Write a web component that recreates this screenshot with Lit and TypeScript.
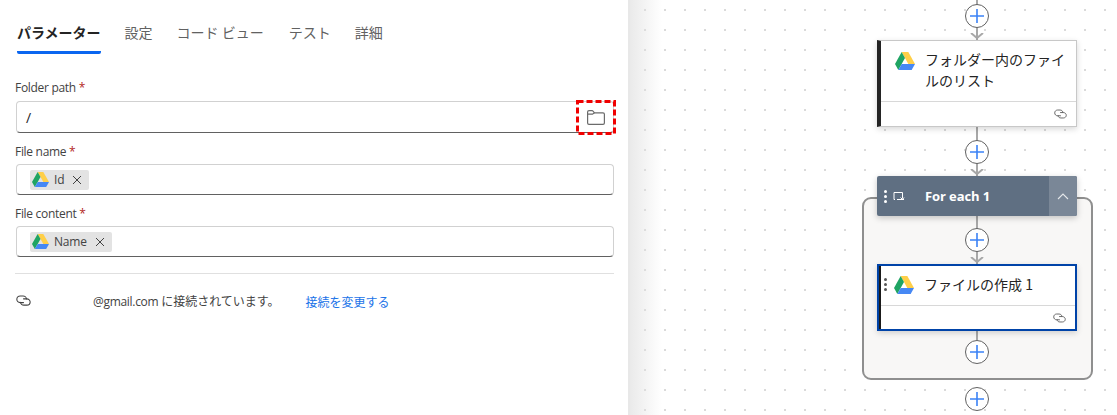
import { LitElement, html, css, svg } from "lit";
import { customElement } from "lit/decorators.js";

const driveIcon = (w: number, h: number) => html`<svg class="drive" width=${w} height=${h} viewBox="0 0 24 21" preserveAspectRatio="none">
  <polygon points="8,0 16,0 24,14 16,14" fill="#ffcf48"></polygon>
  <polygon points="8,0 12,7 4,21 0,14" fill="#1fa463"></polygon>
  <polygon points="8,14 24,14 20,21 4,21" fill="#4688f4"></polygon>
</svg>`;

const linkIcon = (w: number, h: number, stroke: string) => html`<svg width=${w} height=${h} viewBox="0 0 18 13" fill="none" stroke=${stroke} stroke-width="1.3" stroke-linecap="round">
  <path d="M9 9H5C2.800 9 1 7.300 1 5S2.800 1 5 1H8.500C10.700 1 12.500 2.800 12.500 4.600"></path>
  <path d="M9 4.500H13C15.200 4.500 17 6.300 17 8.300S15.200 12 13 12H9.500C7.300 12 5.500 10.500 5.500 8.500"></path>
</svg>`;

const closeIcon = html`<svg class="chip-x" width="10" height="10" viewBox="0 0 10 10" stroke="#424242" stroke-width="1"><path d="M1 1L9 9M9 1L1 9"></path></svg>`;

const folderIcon = html`<svg width="18" height="15" viewBox="0 0 18 15" fill="none" stroke="#6b6b6b" stroke-width="1.2"><path d="M.6 13V2C.6 1.200 1.200.6 2 .6H5C5.600.6 6 1 6.400 1.500L7.400 2.800H16C16.800 2.800 17.400 3.400 17.400 4.200V13C17.400 13.800 16.800 14.400 16 14.400H2C1.200 14.400.6 13.800.6 13Z"></path><path d="M.6 4.200H5.500L7.400 2.800"></path></svg>`;

const plusAt = [16, 152, 240, 352, 399];
const lines = [
  { top: 0, h: 40 },
  { top: 127, h: 49 },
  { top: 216, h: 48 },
  { top: 331, h: 9 },
];
const arrows = [33, 169, 257];

@customElement("app-root")
export class AppRoot extends LitElement {
  static styles = css`
    :host { display: flex; width: 1117px; height: 415px; overflow: hidden; background: #fff;
      font-family: "Open Sans", "Noto Sans CJK JP", sans-serif; color: #242424; }
    * { box-sizing: border-box; }
    .panel { width: 630px; flex: none; border-right: 2px solid #e8e8e8; padding: 0 15px; display: flex; flex-direction: column; background: #fff; }
    .tabs { display: flex; height: 54px; padding-left: 2px; gap: 24px; }
    .tab { font-size: 14px; line-height: 20px; padding-top: 22px; color: #616161; font-family: "Noto Sans CJK JP", sans-serif; height: 54px; }
    .tab.on { font-weight: 700; color: #242424; border-bottom: 3px solid #0a66f0; border-radius: 0 0 2px 2px; }
    .tab.wide { padding-right: 1px; }
    .form { display: flex; flex-direction: column; padding-top: 26px; }
    label { font-size: 12px; letter-spacing: -.3px; line-height: 16px; color: #424242; height: 20px; }
    label.first { height: 21px; }
    label i { color: #b3261e; font-style: normal; }
    .field { height: 32px; margin-left: 1px; margin-bottom: 11px; width: 598px; border: 1px solid #d1d1d1; border-bottom-color: #616161; border-radius: 4px; display: flex; align-items: center; position: relative; padding-left: 9px; font-size: 14px; }
    .field.tok { height: 31px; margin-bottom: 16px; padding-left: 13px; }
    .field.tok.mid { margin-bottom: 11px; }
    .folder { margin-left: auto; margin-right: 8px; display: flex; }
    .dash { position: absolute; left: 559px; top: -2px; display: flex; }
    .chip { display: flex; align-items: center; height: 20px; background: #e3e3e3; border-radius: 2px; font-size: 12px; letter-spacing: -.2px; color: #424242; padding-left: 2px; padding-right: 7px; }
    .chip .drive { margin-right: 5px; }
    .chip-x { margin-left: 8px; }
    hr { margin: 0; border: 0; border-top: 1px solid #e0e0e0; width: 599px; }
    .conn { display: flex; align-items: center; font-size: 12px; height: 20px; margin-top: 17px; color: #424242; }
    .conn .latin { letter-spacing: -.3px; }
    .conn .ic { width: 77px; display: flex; margin: -2px 0 0 1px; }
    .conn a { margin-left: 26px; color: #1a73e8; font-family: "Noto Sans CJK JP", sans-serif; }
    .conn .cj { font-family: "Noto Sans CJK JP", sans-serif; letter-spacing: 0; }

    .canvas { position: relative; flex: 1; background-color: #fff;
      background-image: conic-gradient(from 270deg at 2px 2px, #dadada 0 25%, transparent 0);
      background-size: 20px 20px; background-position: 14px 9px; overflow: hidden; }
    .fade { position: absolute; left: 0; top: 0; bottom: 0; width: 32px; background: linear-gradient(90deg, rgba(225,225,225,.7), rgba(255,255,255,0)); }
    .line { position: absolute; left: 346px; width: 2px; background: #a8a8a8; }
    .scope { position: absolute; left: 232px; top: 197px; width: 231px; height: 183px; border: 2px solid #8f8f8f; border-radius: 9px; background: #f8f7f6; }
    .plus { position: absolute; left: 335px; width: 24px; height: 24px; margin-top: -12px; border-radius: 50%; background: #fff; border: 1px solid #616161; display: flex; align-items: center; justify-content: center; }
    .arrow { position: absolute; left: 340px; }
    .card { position: absolute; left: 247px; width: 200px; background: #fff; display: flex; flex-direction: column; box-shadow: 0 2px 6px rgba(0,0,0,.16); }
    .card.list { top: 40px; height: 87px; border: 1px solid #c8c8c8; border-left: 4px solid #242424; }
    .card.sel { top: 264px; height: 67px; border: 2px solid #0043a8; }
    .card.sel::before { content: ""; position: absolute; left: 0; top: 0; bottom: 0; width: 2px; background: #1a1a1a; }
    .body { display: flex; font-size: 14px; line-height: 21px; font-family: "Noto Sans CJK JP", sans-serif; }
    .list .body { height: 60px; padding: 8px 8px 0 14px; gap: 10px; }
    .sel .body { height: 39px; padding: 8px 6px 0 5px; align-items: flex-start; }
    .sel .body .drive { margin: 2px 10px 0 7px; flex: none; }
    .list .body .drive { flex: none; margin-top: 3px; }
    .foot { flex: 1; border-top: 1px solid #d8d8d8; display: flex; justify-content: flex-end; align-items: center; padding-right: 9px; }
    .grip { display: flex; flex-direction: column; gap: 2px; padding-top: 4px; flex: none; }
    .grip b { width: 3px; height: 3px; border-radius: 50%; background: #555; display: block; }
    .each { position: absolute; left: 247px; top: 176px; width: 200px; height: 40px; background: #5f6f82; border-radius: 2px; color: #fff; display: flex; align-items: center; box-shadow: 0 2px 6px rgba(0,0,0,.22); font-size: 13px; font-weight: 700; }
    .each .grip { padding: 0 0 0 7px; }
    .each .grip b { background: #fff; }
    .each .loop { margin-left: 6px; display: flex; }
    .each .t { margin-left: 20px; flex: 1; letter-spacing: -.1px; }
    .each .up { width: 28px; height: 40px; background: #7a8797; display: flex; align-items: center; justify-content: center; border-radius: 0 2px 2px 0; }
  `;

  render() {
    return html`
      <div class="panel">
        <div class="tabs">
          <div class="tab on">パラメーター</div>
          <div class="tab">設定</div>
          <div class="tab wide">コード ビュー</div>
          <div class="tab">テスト</div>
          <div class="tab">詳細</div>
        </div>
        <div class="form">
          <label class="first">Folder path <i>*</i></label>
          <div class="field">/<span class="folder">${folderIcon}</span>
            <span class="dash"><svg width="40" height="35" viewBox="0 0 40 35" fill="none" stroke="#f00000" stroke-width="3" stroke-dasharray="6 3"><rect x="1.500" y="1.500" width="37" height="32"></rect></svg></span>
          </div>
          <label>File name <i>*</i></label>
          <div class="field tok mid"><span class="chip">${driveIcon(17, 15)}Id${closeIcon}</span></div>
          <label>File content <i>*</i></label>
          <div class="field tok"><span class="chip">${driveIcon(17, 15)}Name${closeIcon}</span></div>
          <hr />
          <div class="conn"><span class="ic">${linkIcon(15, 11, "#424242")}</span><span class="latin">@gmail.com <span class="cj">に接続されています。</span></span><a>接続を変更する</a></div>
        </div>
      </div>
      <div class="canvas">
        <div class="fade"></div>
        <div class="scope"></div>
        ${lines.map((l) => html`<div class="line" style="top:${l.top}px;height:${l.h}px"></div>`)}
        ${arrows.map((y) => html`<svg class="arrow" style="top:${y}px" width="14" height="6" viewBox="0 0 14 6" fill="none" stroke="#a8a8a8" stroke-width="2">${svg`<path d="M1 0L7 5L13 0"></path>`}</svg>`)}
        ${plusAt.map((y) => html`<div class="plus" style="top:${y}px"><svg width="14" height="14" viewBox="0 0 14 14" stroke="#3b82f6" stroke-width="1.6">${svg`<path d="M7 0V14M0 7H14"></path>`}</svg></div>`)}
        <div class="card list">
          <div class="body">${driveIcon(20, 18)}<span>フォルダー内のファイルのリスト</span></div>
          <div class="foot">${linkIcon(13, 10, "#616161")}</div>
        </div>
        <div class="each">
          <div class="grip"><b></b><b></b><b></b></div>
          <span class="loop"><svg width="12" height="12" viewBox="0 0 12 12" fill="none" stroke="#fff" stroke-width="1"><path d="M2 9.500H1V2.500H9.500V8.500M4 9.500H11M7.500 7.500L9.500 9.500M11 7.500L9.500 9.500"></path></svg></span>
          <span class="t">For each 1</span>
          <span class="up"><svg width="12" height="7" viewBox="0 0 12 7" fill="none" stroke="#e4e7ea" stroke-width="1.1"><path d="M1 6L6 1L11 6"></path></svg></span>
        </div>
        <div class="card sel">
          <div class="body"><div class="grip"><b></b><b></b><b></b></div>${driveIcon(20, 18)}<span>ファイルの作成 1</span></div>
          <div class="foot">${linkIcon(13, 10, "#616161")}</div>
        </div>
      </div>
    `;
  }
}
